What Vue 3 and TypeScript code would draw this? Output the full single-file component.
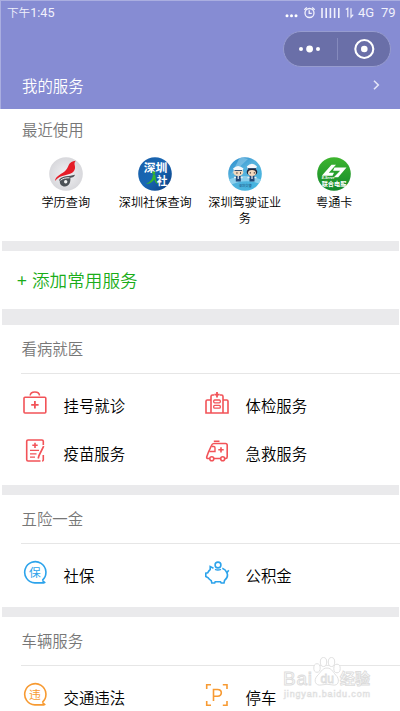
<script setup lang="ts">
interface ServiceItem {
  label: string
  icon: string
}
interface ServiceGroup {
  title: string
  tone: string
  items: ServiceItem[]
}

const recent: { label: string; logo: string }[] = [
  { label: '学历查询', logo: 'edu' },
  { label: '深圳社保查询', logo: 'social' },
  { label: '深圳驾驶证业务', logo: 'license' },
  { label: '粤通卡', logo: 'card' },
]

const groups: ServiceGroup[] = [
  {
    title: '看病就医',
    tone: 'red',
    items: [
      { label: '挂号就诊', icon: 'kit' },
      { label: '体检服务', icon: 'hospital' },
      { label: '疫苗服务', icon: 'vaccine' },
      { label: '急救服务', icon: 'ambulance' },
    ],
  },
  {
    title: '五险一金',
    tone: 'blue',
    items: [
      { label: '社保', icon: 'bao' },
      { label: '公积金', icon: 'piggy' },
    ],
  },
  {
    title: '车辆服务',
    tone: 'orange',
    items: [
      { label: '交通违法', icon: 'wei' },
      { label: '停车', icon: 'parking' },
    ],
  },
]
</script>

<template>
  <div class="screen">
    <header class="header">
      <div class="status">
        <span class="time">下午<span class="digits">1:45</span></span>
        <svg class="status-icons" width="72" height="16" viewBox="0 0 72 16">
          <g fill="#fff">
            <circle cx="2" cy="10.7" r="1.5" /><circle cx="6.5" cy="10.7" r="1.5" /><circle cx="11" cy="10.7" r="1.5" />
          </g>
          <g fill="none" stroke="#f1f1fc" stroke-width="1.3">
            <circle cx="24.5" cy="8" r="4.5" />
            <path d="M24.2 5.3v3.1h2.6M19.3 4.8l2.5-2.2M29.7 4.8l-2.5-2.2" />
            <path d="M37 3v10M41.2 3v10M45.4 3v10M49.6 3v10M53.8 3v10" stroke-width="1.6" />
            <path d="M60.8 4.5l2-1.2v9M66 3.2v9l2.2-2.6" stroke-width="1.2" />
          </g>
        </svg>
        <span class="net">4G</span>
        <span class="battery">79</span>
      </div>
      <div class="capsule">
        <svg width="53" height="34" viewBox="0 0 53 34">
          <g fill="#fff"><circle cx="17" cy="17" r="2" /><circle cx="25.6" cy="17" r="3.4" /><circle cx="34" cy="17" r="2" /></g>
        </svg>
        <i class="capsule-line"></i>
        <svg width="52" height="34" viewBox="0 0 52 34">
          <circle cx="26.3" cy="17" r="9" fill="none" stroke="#fff" stroke-width="2.1" />
          <circle cx="26.3" cy="17" r="3.3" fill="#fff" />
        </svg>
      </div>
      <div class="mine">
        <span>我的服务</span>
        <svg width="8" height="12" viewBox="0 0 8 12"><path d="M1 1.8L5.300 6L1 10.200" fill="none" stroke="#e4e5f7" stroke-width="1.6" /></svg>
      </div>
    </header>

    <section class="recent">
      <h2 class="recent-title">最近使用</h2>
      <div class="recent-grid">
        <div v-for="r in recent" :key="r.logo" class="recent-item">
          <svg v-if="r.logo === 'edu'" width="34" height="34" viewBox="0 0 34 34">
            <defs><radialGradient id="g-edu"><stop offset="0" stop-color="#f1f1f3" /><stop offset="1" stop-color="#d8d8dc" /></radialGradient></defs>
            <circle cx="17" cy="17" r="16.8" fill="url(#g-edu)" />
            <path d="M10 23C13 18.500 20 19.500 26 17.800C25.500 20 23.500 20.500 21.300 20.800C22 26 19.500 29.500 16 29.500C12.500 29.500 10.500 27 10.800 24Z" fill="#4c5156" />
            <path d="M11.500 23.300c2.300-2.100 5.500-2.600 9-2.500" fill="none" stroke="#eee" stroke-width="1" />
            <circle cx="16.700" cy="24.800" r="1.700" fill="#f4f4f4" />
            <path d="M6 24C6.500 18.500 13.500 17 17 13C20.500 9 19 4.500 26.800 3.800C23.500 7 28 9.500 25 14C21 19.500 11.500 16.500 6 24Z" fill="#e51c27" />
          </svg>
          <svg v-else-if="r.logo === 'social'" width="34" height="34" viewBox="0 0 34 34">
            <defs><linearGradient id="g-soc" x1="0" y1="0" x2="1" y2="1"><stop offset="0" stop-color="#1b5fa8" /><stop offset=".5" stop-color="#1767b4" /><stop offset="1" stop-color="#0c3d80" /></linearGradient></defs>
            <circle cx="17" cy="17" r="16.8" fill="url(#g-soc)" />
            <text x="5.7" y="15" class="glyph" font-size="11.8" fill="#fff" font-weight="700">深圳</text>
            <text x="18.7" y="27.800" class="glyph" font-size="10.800" fill="#fff" font-weight="700">社</text>
            <circle cx="15.8" cy="15.8" r="1.5" fill="#35b52c" />
            <path d="M14.800 17.5C15 21.500 12.500 25 8 26.8C12.5 26.800 15.5 24.500 16.2 22C17 25 18 26.500 20 27C17.8 24 17.5 21 17.3 17.6Z" fill="#35b52c" />
          </svg>
          <svg v-else-if="r.logo === 'license'" width="34" height="34" viewBox="0 0 34 34">
            <defs>
              <linearGradient id="g-lic" x1="0" y1="0" x2=".6" y2="1"><stop offset="0" stop-color="#2384c8" /><stop offset=".45" stop-color="#55b1dd" /><stop offset="1" stop-color="#45b4df" /></linearGradient>
              <clipPath id="c-lic"><circle cx="17" cy="17" r="16.8" /></clipPath>
            </defs>
            <g clip-path="url(#c-lic)">
              <rect width="34" height="34" fill="url(#g-lic)" />
              <path d="M12 0L3 18L20 2Z" fill="#91cbea" opacity=".6" />
              <path d="M0 23Q16 15 34 23V28Q18 20 0 29Z" fill="#a5dcf2" opacity=".7" />
              <ellipse cx="10.3" cy="15.2" rx="5" ry="3.8" fill="#f1d8bd" />
              <ellipse cx="24" cy="15" rx="5.3" ry="4" fill="#222638" />
              <ellipse cx="24" cy="16" rx="4" ry="3" fill="#f4d8bd" />
              <path d="M5 11.5Q10 6.5 15.5 11.5L14 14H6.5Z" fill="#f5f7fa" />
              <path d="M18.8 9.5Q24 4 29 9.5L27.8 12H20Z" fill="#f5f7fa" />
              <path d="M6.5 13.5h7.5M20 11.5h8" stroke="#365173" />
              <path d="M8.5 16h.9M12 16h.9M21.8 15.8h1M25.8 15.8h1" stroke="#222" stroke-width="1.3" />
              <path d="M7.8 19h5v5.5h-5zM21.5 19h5v5.5h-5z" fill="#214777" />
              <path d="M6 20.5h2M12.7 20.5h2M19.5 20.5h2M26.5 20.5h2" stroke="#e9edf0" stroke-width="1.5" />
              <path d="M10.2 19v3M24 19v3" stroke="#fff" stroke-width="1.1" />
              <text x="10.7" y="30" class="glyph" font-size="3.3" fill="#184e79">深圳交警</text>
            </g>
          </svg>
          <svg v-else width="34" height="34" viewBox="0 0 34 34">
            <defs><linearGradient id="g-card" x1="0" y1="0" x2="0" y2="1"><stop offset="0" stop-color="#3eb52f" /><stop offset="1" stop-color="#11882a" /></linearGradient></defs>
            <circle cx="17" cy="17" r="16.8" fill="url(#g-card)" />
            <path d="M4.8 18.8L14.5 7.8H19L11.8 15.7H17L15.5 18.8ZM17.5 10.6H29.5L21.2 20.3H16.8L23.2 13.7H16Z" fill="#fff" />
            <text x="4.7" y="22" class="latin" font-size="3.4" font-weight="bold" font-style="italic" fill="#fff">E-Serve</text>
            <text x="4.700" y="28.500" class="glyph" font-size="6.200" font-weight="700" fill="#fff">联合电服</text>
          </svg>
          <span class="recent-label">{{ r.label }}</span>
        </div>
      </div>
    </section>

    <div class="band"></div>
    <section class="add"><span class="plus">+</span><span>添加常用服务</span></section>
    <div class="band tall"></div>

    <template v-for="(g, i) in groups" :key="g.title">
      <div v-if="i > 0" class="band"></div>
      <section class="group">
        <h2 class="group-title">{{ g.title }}</h2>
        <div class="group-grid" :class="g.tone">
          <div v-for="item in g.items" :key="item.label" class="service">
            <svg class="service-icon" width="26" height="26" viewBox="0 0 26 26" fill="none" stroke="currentColor" stroke-width="1.6">
              <g v-if="item.icon === 'kit'">
                <rect x="2" y="7.2" width="21.8" height="15.8" rx="1" />
                <path d="M8.2 5.5C8.5 .8 17.2 .8 17.5 5.5" />
                <path d="M9.2 14.8h7.4M12.9 11v7.6" stroke-width="1.8" />
              </g>
              <g v-else-if="item.icon === 'hospital'">
                <path d="M7 23V6.5Q7 5 8.500 5H10M16 5h1.500Q19 5 19 6.500V23M7 10H3.200Q2 10 2 11.200V23H24V11.200Q24 10 22.800 10H19" />
                <path d="M10.300 4.700h5.400M13 2v5.400" stroke-width="1.8" />
                <rect x="9.700" y="10" width="6.600" height="2.800" rx="1" stroke-width="1.300" />
                <rect x="9.700" y="15.400" width="6.600" height="2.800" rx="1" stroke-width="1.300" />
              </g>
              <g v-else-if="item.icon === 'vaccine'">
                <path d="M21.300 7V3.200Q21.300 2 20 2H6Q4.700 2 4.700 3.200V21.600Q4.700 23 6 23H18.500M21.300 17V22Q21.300 23 20 23" />
                <path d="M10.300 7.300h5.400M13 4.700V10" stroke-width="1.600" />
                <path d="M8 12.300h9M8 15.800h6.500M8 19.200h5" stroke-width="1.300" />
                <path d="M21.700 8.200L17 17.500L16.200 20.500" stroke-width="1.700" />
              </g>
              <g v-else-if="item.icon === 'ambulance'">
                <path d="M5.800 20.500H4Q2.500 20.500 2.700 19L4.500 14L7.500 7.500Q8.200 5.500 10 5.500H21.500Q23.200 5.500 23.200 7.200V18.800Q23.200 20.500 21.700 20.500H20.800M10 20.500H16.500M9.800 3.200H15.500" />
                <path d="M8 8.500h1.800Q11 8.500 11 9.700V13.500H5.300" stroke-width="1.400" />
                <path d="M14.300 11.800h5.400M17 9.200v5.300" stroke-width="1.600" />
                <circle cx="7.800" cy="20.700" r="2" /><circle cx="18.700" cy="20.700" r="2" />
              </g>
              <g v-else-if="item.icon === 'piggy'">
                <circle cx="14" cy="5" r="2.900" />
                <path d="M11 9.400C12.700 10.200 15 10.200 17 9.400" stroke-width="1.400" />
                <path d="M9.500 8.200L6.200 6.500V9.500C4.800 10.500 4.200 11.800 3.700 12.800L1.800 13.200V16.500L4.200 17.800C5 19.200 6.200 20 7.200 20.600L7.800 23H10.700L11.200 21.800H16.500L17.200 23H20L20.600 20.300C22.500 18.700 23.700 17 23.500 14.700L22.900 12.800L24.700 10.300M22.900 12.800C22 10.300 20.500 9 18.300 8.200" />
              </g>
              <g v-else-if="item.icon === 'parking'">
                <path d="M2.700 7V2.800H7M18.800 2.800H23V7M23 19V23.300H18.800M7 23.300H2.700V19" />
                <path d="M9.500 19V7.500H13.500Q17.300 7.500 17.300 10.800T13.500 14.200H9.500" />
              </g>
              <g v-else>
                <path d="M20.400 20.200A10.600 10.600 0 1 0 12.800 22.900H22.200M20.300 20.300L23.300 23" />
                <text x="12.8" y="16.600" text-anchor="middle" class="glyph" font-size="11.800" font-weight="400" fill="currentColor" stroke="none">{{ item.icon === 'bao' ? '保' : '违' }}</text>
              </g>
            </svg>
            <span class="service-label">{{ item.label }}</span>
          </div>
        </div>
      </section>
    </template>

    <svg class="watermark" width="94" height="48" viewBox="0 0 94 48">
      <g fill="#fff" stroke="#dcdcdc" stroke-width=".9" class="latin">
        <text x="3" y="29" font-size="19" textLength="29">Bai</text>
        <ellipse cx="37" cy="12" rx="3.200" ry="4.300" /><ellipse cx="43.500" cy="6" rx="3.200" ry="4.500" />
        <ellipse cx="51.500" cy="6" rx="3.200" ry="4.500" /><ellipse cx="57" cy="12.500" rx="3.200" ry="4.300" />
        <path d="M47 12C42 12 40.500 17 37 20C33 25 36 30 41 29Q47 27.500 53 29C58 30 60 25 57 20.500C53.500 17 52 12 47 12Z" />
        <text x="40.500" y="27" font-size="12" stroke-width=".8">du</text>
        <text x="60" y="28" font-size="15" font-weight="bold" class="glyph">经验</text>
      </g>
      <text x="4" y="41" font-size="9" textLength="86" class="latin" fill="#fff" stroke="#dedede" stroke-width=".6">jingyan.baidu.com</text>
    </svg>
  </div>
</template>

<style>
body {
  background: #fff;
  overflow: hidden;
}
</style>

<style scoped>
.screen {
  position: relative;
  box-sizing: border-box;
  width: 400px;
  height: 711px;
  overflow: hidden;
  background: #fff;
  color: #000;
  font-family: "Noto Sans CJK SC", sans-serif;
  font-weight: 350;
}
.glyph { font-family: "Liberation Sans", "Noto Sans CJK SC", sans-serif; }
.latin { font-family: "Liberation Sans", sans-serif; }
.header {
  box-sizing: border-box;
  height: 109px;
  background: #868cd3;
  border-top: 1px solid #aaaee0;
  border-left: 1px solid #aaaee0;
  color: #fff;
  display: flex;
  flex-direction: column;
}
.status {
  height: 23px;
  display: flex;
  align-items: center;
  padding-left: 6px;
  font-size: 11.6px;
  line-height: 22px;
  color: #f1f1fc;
  font-weight: 400;
}
.time { width: 278px; font-weight: 350; }
.digits { font-family: Roboto, sans-serif; font-size: 12.6px; font-weight: 400; }
.status-icons { flex: none; }
.net, .battery { font-family: Roboto, sans-serif; font-size: 13px; }
.net { margin-left: 1px; width: 23px; }
.capsule {
  box-sizing: border-box;
  width: 108px;
  height: 36px;
  margin: 7px 0 0 282px;
  border: 1px solid #979ccf;
  border-radius: 18px;
  background: #6a6fa8;
  display: flex;
  align-items: center;
}
.capsule-line { width: 1px; height: 22px; background: #858abd; }
.mine {
  display: flex;
  align-items: center;
  justify-content: space-between;
  height: 36px;
  padding: 0 19px 0 21px;
  font-size: 15.4px;
}
.recent { height: 132px; }
.recent-title, .group-title {
  margin: 0;
  font-size: 15.4px;
  font-weight: 350;
  color: #777;
}
.recent-title { padding-left: 22px; height: 48px; line-height: 41px; }
.recent-grid {
  display: grid;
  grid-template-columns: repeat(4, 89.5px);
  padding-left: 21px;
}
.recent-item { display: flex; flex-direction: column; align-items: center; }
.recent-label {
  width: 74px;
  margin-top: 3px;
  font-size: 12.15px;
  line-height: 16px;
  text-align: center;
}
.band { height: 10px; margin: 0 1px 0 2px; background: #eaeaec; }
.band.tall { height: 16px; }
.add {
  box-sizing: border-box;
  height: 58px;
  padding: 0 0 1px 17px;
  display: flex;
  align-items: center;
  font-size: 17.6px;
  color: #1aad19;
}
.plus { width: 15px; font-weight: 400; }
.group { height: 112px; }
.group:has(.red) { height: 160px; }
.group-title {
  height: 48px;
  line-height: 47px;
  margin-left: 21px;
  border-bottom: 1px solid #e6e6e6;
  padding-left: 0.5px;
}
.group-grid {
  display: grid;
  grid-template-columns: 182px 1fr;
  grid-auto-rows: 48px;
  padding: 9px 0 0 22px;
}
.service { display: flex; align-items: center; gap: 15.5px; font-size: 15.4px; }
.service-label { padding-bottom: 4px; }
.service-icon { position: relative; top: -4px; flex: none; }
.red .service-icon { color: #f25358; }
.blue .service-icon { color: #2ca3eb; }
.orange .service-icon { color: #f79a32; }
.watermark { position: absolute; left: 280px; top: 656px; }
</style>
